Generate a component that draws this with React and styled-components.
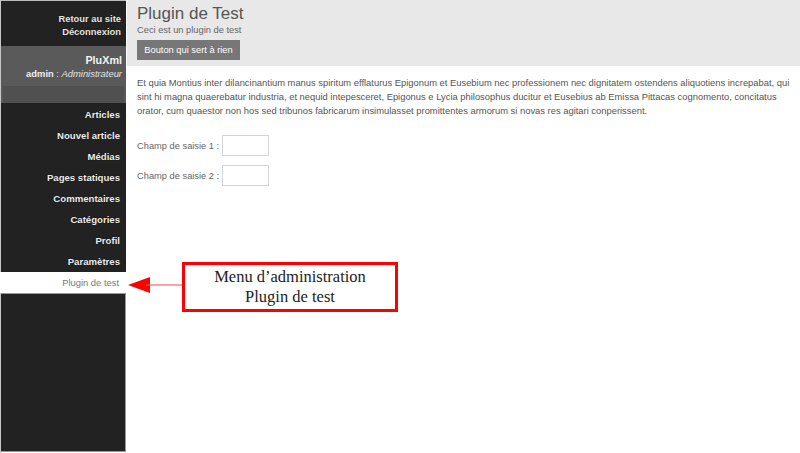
import React from "react";
import styled, { createGlobalStyle } from "styled-components";

const Global = createGlobalStyle`
  html, body { margin: 0; padding: 0; background: #fff; }
  body { font-family: "Liberation Sans", Arial, sans-serif; }
  * { box-sizing: border-box; }
`;

const Page = styled.div`
  position: relative;
  width: 800px;
  height: 453px;
  display: flex;
  overflow: hidden;
`;

const Sidebar = styled.aside`
  width: 126px;
  flex: none;
  display: flex;
  flex-direction: column;
  border-left: 1px solid #c8c8c8;
`;

const DarkBlock = styled.div`
  background: #222;
  text-align: right;
  padding-right: ${(p) => p.$pr || 5}px;
`;

const TopLinks = styled(DarkBlock)`
  height: 46px;
  padding-top: 11px;
  border-top: 1px solid #bbb;
`;

const TopLink = styled.div`
  font-size: 9.4px;
  line-height: 13px;
  color: #e8e8e8;
  font-weight: bold;
  text-shadow: 0 0 1px #000;
`;

const Profile = styled.div`
  background: #5a5a5a;
  height: 57px;
  padding: 8px 4px 0 2px;
  text-align: right;
  display: flex;
  flex-direction: column;
`;

const Brand = styled.div`
  font-size: 10.8px;
  font-weight: bold;
  color: #f2f2f2;
  line-height: 13px;
`;

const User = styled.div`
  font-size: 9.4px;
  line-height: 13px;
  color: #ddd;
  white-space: nowrap;
  b { color: #f0f0f0; }
  i { color: #e4e4e4; }
`;

const Band = styled.div`
  margin-top: 6px;
  height: 22px;
  background: #505050;
  margin-right: -2px;
`;

const Menu = styled(DarkBlock)`
  padding-top: 1px;
`;

const MenuItem = styled.div`
  height: 21px;
  line-height: 21px;
  font-size: 9.6px;
  font-weight: bold;
  color: #eee;
  text-shadow: 0 0 1px #000;
`;

const ActiveItem = styled.div`
  height: 21px;
  line-height: 21px;
  font-size: 9.4px;
  color: #777;
  text-align: right;
  padding-right: 7px;
  background: #fff;
  margin-left: -1px;
`;

const Filler = styled.div`
  flex: none;
  height: 159px;
  background: #222;
  border: 1px solid #999;
  border-left: none;
`;

const Main = styled.main`
  flex: 1;
  margin-left: 1px;
  display: flex;
  flex-direction: column;
`;

const Header = styled.header`
  background: #e8e8e8;
  height: 66px;
  padding: 4px 10px 0 10px;
`;

const Title = styled.h1`
  margin: 0;
  font-size: 17px;
  font-weight: normal;
  color: #555;
  line-height: 20px;
`;

const Subtitle = styled.div`
  font-size: 9.3px;
  color: #666;
  line-height: 13px;
`;

const Button = styled.button`
  margin-top: 3px;
  height: 20px;
  width: 103px;
  padding: 0;
  border: none;
  background: #777;
  color: #fff;
  font-family: "Liberation Sans", Arial, sans-serif;
  font-size: 9.3px;
`;

const Content = styled.div`
  padding: 10px 8px 0 10px;
`;

const Para = styled.p`
  margin: 0;
  font-size: 9.4px;
  line-height: 14px;
  color: #555;
`;

const Form = styled.div`
  margin-top: 17px;
  display: flex;
  flex-direction: column;
  gap: 9px;
`;

const Field = styled.div`
  display: flex;
  align-items: center;
  gap: 3px;
  font-size: 9.3px;
  color: #666;
`;

const Input = styled.div`
  width: 47px;
  height: 21px;
  border: 1px solid #d4d4d4;
  background: #fff;
`;

const Callout = styled.div`
  position: absolute;
  left: 182px;
  top: 262px;
  width: 216px;
  height: 50px;
  border: 3px solid #f00;
  background: #fff;
  font-family: "Liberation Serif", "Times New Roman", serif;
  font-size: 16.5px;
  line-height: 20px;
  color: #222;
  text-align: center;
  display: flex;
  flex-direction: column;
  justify-content: center;
`;

const Arrow = styled.svg`
  position: absolute;
  left: 126px;
  top: 274px;
`;

const items = [
  "Articles",
  "Nouvel article",
  "Médias",
  "Pages statiques",
  "Commentaires",
  "Catégories",
  "Profil",
  "Paramètres",
];

export default function App() {
  return (
    <>
      <Global />
      <Page>
        <Sidebar>
          <TopLinks>
            <TopLink>Retour au site</TopLink>
            <TopLink>Déconnexion</TopLink>
          </TopLinks>
          <Profile>
            <Brand>PluXml</Brand>
            <User>
              <b>admin</b> : <i>Administrateur</i>
            </User>
            <Band />
          </Profile>
          <Menu $pr={6}>
            {items.map((t) => (
              <MenuItem key={t}>{t}</MenuItem>
            ))}
          </Menu>
          <ActiveItem>Plugin de test</ActiveItem>
          <Filler />
        </Sidebar>
        <Main>
          <Header>
            <Title>Plugin de Test</Title>
            <Subtitle>Ceci est un plugin de test</Subtitle>
            <Button>Bouton qui sert à rien</Button>
          </Header>
          <Content>
            <Para>
              Et quia Montius inter dilancinantium manus spiritum efflaturus
              Epigonum et Eusebium nec professionem nec dignitatem ostendens
              aliquotiens increpabat, qui sint hi magna quaerebatur industria,
              et nequid intepesceret, Epigonus e Lycia philosophus ducitur et
              Eusebius ab Emissa Pittacas cognomento, concitatus orator, cum
              quaestor non hos sed tribunos fabricarum insimulasset
              promittentes armorum si novas res agitari conperissent.
            </Para>
            <Form>
              <Field>
                Champ de saisie 1 : <Input />
              </Field>
              <Field>
                Champ de saisie 2 : <Input />
              </Field>
            </Form>
          </Content>
        </Main>
        <Arrow width="60" height="22" viewBox="0 0 60 22">
          <polygon points="2,11 24,3 24,19" fill="#f00" />
          <line x1="20" y1="11" x2="58" y2="11" stroke="#f44" strokeWidth="1" />
        </Arrow>
        <Callout>
          <div>Menu d’administration</div>
          <div>Plugin de test</div>
        </Callout>
      </Page>
    </>
  );
}
